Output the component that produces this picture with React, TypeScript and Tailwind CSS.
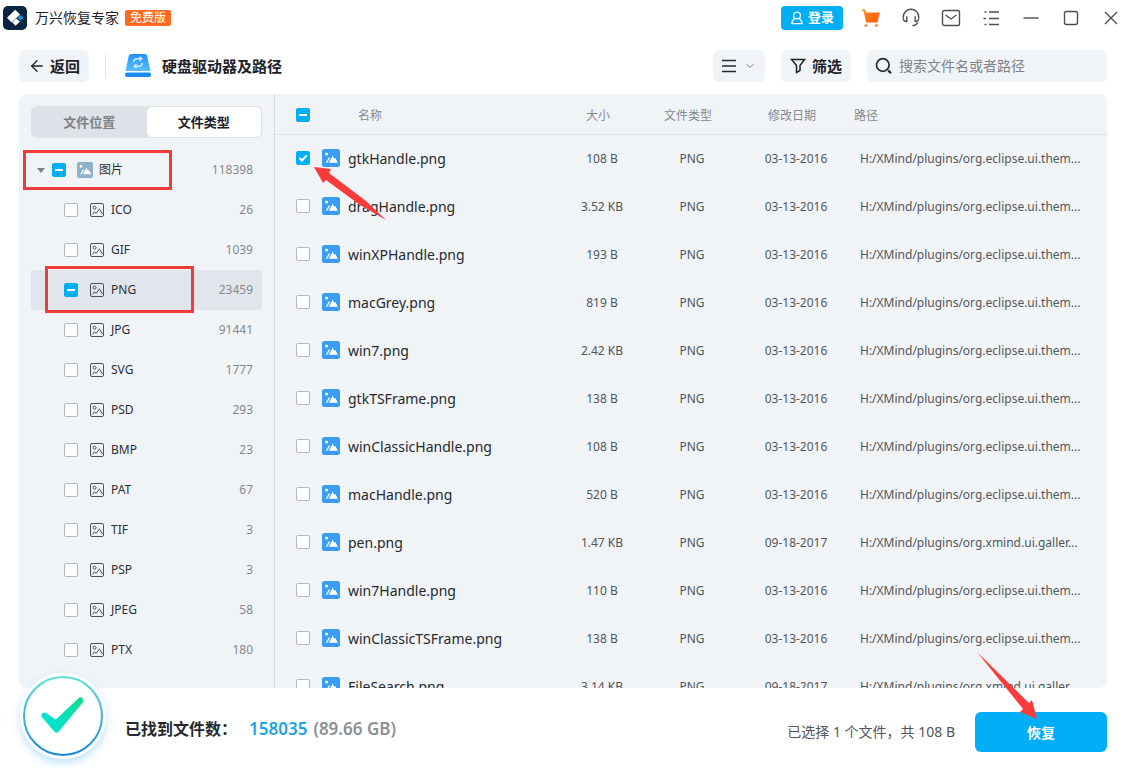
import { ArrowLeft, ChevronDown } from 'lucide-react';

type FileRow = { name: string; size: string; date: string; path: string };

const themePath = 'H:/XMind/plugins/org.eclipse.ui.them...';
const galleryPath = 'H:/XMind/plugins/org.xmind.ui.galler...';

const fileTypes = [
  { label: 'ICO', count: 26 },
  { label: 'GIF', count: 1039 },
  { label: 'PNG', count: 23459 },
  { label: 'JPG', count: 91441 },
  { label: 'SVG', count: 1777 },
  { label: 'PSD', count: 293 },
  { label: 'BMP', count: 23 },
  { label: 'PAT', count: 67 },
  { label: 'TIF', count: 3 },
  { label: 'PSP', count: 3 },
  { label: 'JPEG', count: 58 },
  { label: 'PTX', count: 180 },
];

const files: FileRow[] = [
  { name: 'gtkHandle.png', size: '108 B', date: '03-13-2016', path: themePath },
  { name: 'dragHandle.png', size: '3.52 KB', date: '03-13-2016', path: themePath },
  { name: 'winXPHandle.png', size: '193 B', date: '03-13-2016', path: themePath },
  { name: 'macGrey.png', size: '819 B', date: '03-13-2016', path: themePath },
  { name: 'win7.png', size: '2.42 KB', date: '03-13-2016', path: themePath },
  { name: 'gtkTSFrame.png', size: '138 B', date: '03-13-2016', path: themePath },
  { name: 'winClassicHandle.png', size: '108 B', date: '03-13-2016', path: themePath },
  { name: 'macHandle.png', size: '520 B', date: '03-13-2016', path: themePath },
  { name: 'pen.png', size: '1.47 KB', date: '09-18-2017', path: galleryPath },
  { name: 'win7Handle.png', size: '110 B', date: '03-13-2016', path: themePath },
  { name: 'winClassicTSFrame.png', size: '138 B', date: '03-13-2016', path: themePath },
  { name: 'FileSearch.png', size: '3.14 KB', date: '09-18-2017', path: galleryPath },
];

type CheckState = 'off' | 'on' | 'mixed';

function Checkbox({ id, label, state = 'off' }: { id?: string; label?: string; state?: CheckState }) {
  return (
    <span className="relative block h-3.5 w-3.5 shrink-0">
      <input
        type="checkbox"
        id={id}
        aria-label={label}
        defaultChecked={state === 'on'}
        ref={(el) => {
          if (el) el.indeterminate = state === 'mixed';
        }}
        className="block h-3.5 w-3.5 appearance-none rounded-[2px] border border-[#b4b9be] bg-white checked:border-[#00aef5] checked:bg-[#00aef5] indeterminate:border-[#00aef5] indeterminate:bg-[#00aef5]"
      />
      {state !== 'off' && (
        <svg viewBox="0 0 14 14" className="pointer-events-none absolute inset-0" fill="none" stroke="#fff" strokeWidth="2">
          {state === 'on' ? <path d="M3.5 7 6 9.5 10.7 4.3" /> : <path d="M3 7h8" />}
        </svg>
      )}
    </span>
  );
}

function PictureIcon({ className }: { className: string }) {
  return (
    <svg viewBox="0 0 18 18" className={className} aria-hidden="true">
      <rect width="18" height="18" rx="2.5" fill="currentColor" />
      <circle cx="4.6" cy="5" r="1.5" fill="#fff" />
      <path d="M3.6 13.8 6.6 8.8 8.2 8.8 5.3 13.8Z" fill="#fff" />
      <path d="M6.8 13.8 10.6 6.6 12.4 9.8 13.2 8.8 16 13.8Z" fill="#fff" />
    </svg>
  );
}

function OutlinePictureIcon() {
  return (
    <svg viewBox="0 0 14 14" className="h-3.5 w-3.5 shrink-0" fill="none" stroke="#4d5357" aria-hidden="true">
      <rect x="0.5" y="0.5" width="13" height="13" rx="1.5" />
      <circle cx="4.6" cy="4.6" r="1.5" />
      <path d="M2.5 11.5 4.2 9l2.2 1.2L9.4 5.8l3 5.2" />
    </svg>
  );
}

function TitleBar() {
  return (
    <header className="flex h-9 shrink-0 items-center justify-between pr-2 pl-[3px]">
      <div className="flex items-center">
        <svg viewBox="0 0 24 24" className="h-6 w-6" aria-hidden="true">
          <rect width="24" height="24" rx="5" fill="#0b2440" />
          <path d="M12.2 3.8 17 8.5 8.6 16.4 4 11.8Z" fill="#fff" />
          <path d="M16.6 9.6h2L20.6 11.8 17.6 14.6 14 12Z" fill="#1f8fc9" />
          <path d="M13 12.4 17 15.4 12.6 19.8 9.4 16.6Z" fill="#fff" />
        </svg>
        <h1 className="ml-2 text-sm text-[#1d2226]">万兴恢复专家</h1>
        <span className="ml-1.5 flex h-4 items-center rounded-xs bg-[#ff6a1f] px-[5px] text-xs text-white">免费版</span>
      </div>
      <div className="flex items-center gap-5 text-[#4a4f54]">
        <button className="-mr-0.5 flex h-6 w-[62px] items-center justify-center gap-1 rounded bg-[#00aef5] text-[13px] font-bold text-white">
          <svg viewBox="0 0 14 14" className="h-3.5 w-3.5" fill="none" stroke="currentColor" strokeWidth="1.3">
            <circle cx="7" cy="4.5" r="3.4" />
            <path d="M4.8 7.6C2.8 8.6 2 10.3 1.8 12.6h10.4c-.2-2.3-1-4-3-5" />
          </svg>
          登录
        </button>
        <button aria-label="购物车">
          <svg viewBox="0 0 20 20" className="h-5 w-5">
            <defs>
              <linearGradient id="cart" x1="0" y1="0" x2="1" y2="1">
                <stop offset="0" stopColor="#ff8a1c" />
                <stop offset="1" stopColor="#ff5a0a" />
              </linearGradient>
            </defs>
            <path d="M1 1.5h3l.9 2.9H19L16.400 14.500H5.200L2.600 3H1Z" fill="url(#cart)" />
            <path d="M3.500 17.500h2.800M14 17.500h2.800" stroke="#ff6a1f" strokeWidth="2" />
          </svg>
        </button>
        <button aria-label="客服">
          <svg viewBox="0 0 20 20" className="h-5 w-5" fill="none" stroke="currentColor" strokeWidth="1.4">
            <path d="M2.300 10.500V9a7.700 7.700 0 0 1 15.400 0v1.500" />
            <path d="M5.800 8.200v5.300c-2 0-3.500-1.200-3.500-2.900M14.200 8.200v5.300c2 0 3.500-1.200 3.500-2.900" />
            <path d="M16.800 14.500c-.9 1.800-2.500 2.900-5.300 3.200" />
          </svg>
        </button>
        <button aria-label="邮件">
          <svg viewBox="0 0 20 20" className="h-5 w-5" fill="none" stroke="currentColor" strokeWidth="1.4">
            <rect x="1.500" y="2.500" width="17" height="15" rx="2" />
            <path d="m4.500 7 5.500 4 5.500-4" />
          </svg>
        </button>
        <button aria-label="菜单">
          <svg viewBox="0 0 20 20" className="h-5 w-5" fill="none" stroke="currentColor" strokeWidth="1.4">
            <path d="M3.500 4h2M8 4H18M2.500 10.500h2.500M8 10.500H18M3.500 16.500h2M8 16.500H18" />
          </svg>
        </button>
        <button aria-label="最小化">
          <svg viewBox="0 0 20 20" className="h-5 w-5" fill="none" stroke="currentColor" strokeWidth="1.4">
            <path d="M2.500 10h15" />
          </svg>
        </button>
        <button aria-label="最大化">
          <svg viewBox="0 0 20 20" className="h-5 w-5" fill="none" stroke="currentColor" strokeWidth="1.4">
            <rect x="3.500" y="3.500" width="13" height="13" rx="2" />
          </svg>
        </button>
        <button aria-label="关闭" className="-mr-0.5">
          <svg viewBox="0 0 20 20" className="h-5 w-5" fill="none" stroke="currentColor" strokeWidth="1.4">
            <path d="m4 4 12 12M16 4 4 16" />
          </svg>
        </button>
      </div>
    </header>
  );
}

function Toolbar() {
  return (
    <div className="flex h-[58px] shrink-0 items-center px-5 pt-0.5">
      <button className="-ml-px flex h-8 w-[70px] items-center justify-center gap-1 rounded-md bg-[#f1f4f7] text-[15px] font-bold text-[#1d2226]">
        <ArrowLeft size={18} strokeWidth={1.75} />
        返回
      </button>
      <div className="ml-4 h-6 w-px bg-[#e3e7ea]" />
      <svg viewBox="0 0 26 24" className="ml-[19px] h-6 w-[26px]" aria-hidden="true">
        <defs>
          <linearGradient id="drive" x1="0" y1="0" x2="0" y2="1">
            <stop offset="0" stopColor="#1f93f5" />
            <stop offset="1" stopColor="#5cc0ff" />
          </linearGradient>
        </defs>
        <path d="M6.500 0h13c1.500 0 2.500.8 2.800 2.200L25.500 17H.5L3.700 2.200C4 .8 5 0 6.500 0Z" fill="url(#drive)" />
        <rect y="18.500" width="26" height="4.500" rx="2" fill="#1a8cf0" />
        <path d="M8.600 8.200c0-2.200 1.400-3.400 3.600-3.400h4M14.400 2.800l2.400 2-2.400 2M17.400 8.800c0 2.200-1.400 3.400-3.600 3.400h-4M11.600 14.200l-2.400-2 2.400-2" fill="none" stroke="#cfeaff" strokeWidth="1.500" />
      </svg>
      <h2 className="ml-[11px] text-[15px] font-bold text-[#1d2226]">硬盘驱动器及路径</h2>

      <div className="ml-auto flex items-center">
        <button aria-label="视图" className="flex h-8 w-[52px] items-center justify-center gap-2 rounded-md bg-[#f1f4f7]">
          <svg viewBox="0 0 14 14" className="h-3.5 w-3.5" stroke="#25292d" strokeWidth="1.500">
            <path d="M0 1.500h14M0 7h14M0 12.500h14" />
          </svg>
          <ChevronDown size={12} strokeWidth={2} className="text-[#7a8085]" />
        </button>
        <button className="ml-4 flex h-8 w-[70px] items-center justify-center gap-1.5 rounded-md bg-[#f1f4f7] text-[15px] font-bold text-[#1d2226]">
          <svg viewBox="0 0 16 16" className="h-4 w-4" fill="none" stroke="currentColor" strokeWidth="1.500">
            <path d="M1.500 1.500h13L10 7.500v5l-3.500 2v-7Z" />
          </svg>
          筛选
        </button>
        <label className="ml-4 flex h-8 w-60 items-center gap-1.5 rounded-md bg-[#f1f4f7] pl-2">
          <svg viewBox="0 0 18 18" className="h-[18px] w-[18px] shrink-0" fill="none" stroke="#25292d" strokeWidth="1.700">
            <circle cx="7.800" cy="8" r="6.300" />
            <path d="m13.200 13.400 2.800 2.800" strokeWidth="2.200" />
          </svg>
          <input
            type="text"
            aria-label="搜索文件名或者路径"
            placeholder="搜索文件名或者路径"
            className="min-w-0 flex-1 bg-transparent text-sm outline-none placeholder:text-[#7d8388]"
          />
        </label>
      </div>
    </div>
  );
}

function Sidebar() {
  return (
    <aside className="flex w-64 shrink-0 flex-col border-r border-[#d7dce0] px-3 pt-3">
      <div className="mb-3 flex h-8 shrink-0 rounded-md bg-[#dce2e7] p-px text-[13px] font-bold">
        <button className="flex-1 pt-0.5 text-[#7b8186]">文件位置</button>
        <button className="flex-1 rounded-[5px] bg-white pt-0.5 text-[#1d2226]">文件类型</button>
      </div>
      <ul className="text-xs text-[#2a2f34]">
        <li className="relative flex h-10 items-center pr-[9px] pl-1.5">
          <svg viewBox="0 0 8 5" className="h-[5px] w-2" aria-hidden="true">
            <path d="M0 0h8L4 5Z" fill="#7b8186" />
          </svg>
          <label className="ml-[7px] flex items-center">
            <Checkbox state="mixed" />
            <PictureIcon className="ml-[11px] h-4 w-4 text-[#8fb0ca]" />
            <span className="ml-1.5">图片</span>
          </label>
          <span className="ml-auto text-[#84898e]">118398</span>
          <div className="pointer-events-none absolute top-0 -left-2 h-10 w-[149px] border-3 border-[#ee3b3b]" />
        </li>
        {fileTypes.map(({ label, count }) => {
          const active = label === 'PNG';
          return (
            <li
              key={label}
              className={`relative flex h-10 items-center rounded-xs pr-[9px] pl-[33px] ${active ? 'bg-[#e0e6ec]' : ''}`}
            >
              <label className="flex items-center">
                <Checkbox state={active ? 'mixed' : 'off'} />
                <span className="ml-3">
                  <OutlinePictureIcon />
                </span>
                <span className="ml-[7px]">{label}</span>
              </label>
              <span className="ml-auto text-[#84898e]">{count}</span>
              {active && (
                <div className="pointer-events-none absolute -top-1 left-3.5 h-[47px] w-[149px] border-3 border-[#ee3b3b]" />
              )}
            </li>
          );
        })}
      </ul>
    </aside>
  );
}

function FileTable() {
  return (
    <div className="relative min-w-0 flex-1">
      <div className="h-full overflow-hidden">
        <table className="w-full table-fixed border-collapse text-xs text-[#50565b]">
          <colgroup>
            <col className="w-[47px]" />
            <col />
            <col className="w-[88px]" />
            <col className="w-[92px]" />
            <col className="w-[116px]" />
            <col className="w-[253px]" />
          </colgroup>
          <thead>
            <tr className="h-10 border-b border-[#dde2e6] text-[#84898e]">
              <th className="pt-0.5 pl-[21px]">
                <Checkbox state="mixed" label="全选" />
              </th>
              <th className="pt-1 pl-9 text-left font-normal">名称</th>
              <th className="pt-1 pr-2 text-center font-normal">大小</th>
              <th className="pt-1 pr-2 text-center font-normal">文件类型</th>
              <th className="pt-1 pr-2 text-center font-normal">修改日期</th>
              <th className="pt-1 text-left font-normal">路径</th>
            </tr>
          </thead>
          <tbody>
            {files.map(({ name, size, date, path }, i) => (
              <tr key={name} className="h-12">
                <td className="pl-[21px]">
                  <Checkbox id={`file-${i}`} state={i === 0 ? 'on' : 'off'} />
                </td>
                <td>
                  <label htmlFor={`file-${i}`} className="flex items-center gap-2 text-[#25292d]">
                    <PictureIcon className="h-[18px] w-[18px] shrink-0 text-[#389bf5]" />
                    <span className="pt-0.5 text-sm">{name}</span>
                  </label>
                </td>
                <td className="pt-0.5 text-center">{size}</td>
                <td className="pt-0.5 text-center">PNG</td>
                <td className="pt-0.5 text-center">{date}</td>
                <td className="truncate pt-0.5 pl-1.5">{path}</td>
              </tr>
            ))}
          </tbody>
        </table>
      </div>
      {/* pointer to the ticked row */}
      <svg viewBox="0 0 72 53" className="pointer-events-none absolute top-[73px] left-[39px] h-[53px] w-[72px]" aria-hidden="true">
        <path d="M0 0 17 2 15 6 52 34 72 53 46 38 12 13 9 16Z" fill="#fb3a3a" />
      </svg>
    </div>
  );
}

function FooterBar() {
  return (
    <footer className="relative flex h-20 shrink-0 items-center px-5">
      <svg viewBox="0 0 100 100" className="absolute -top-5 left-[13px] h-[100px] w-[100px]" aria-hidden="true">
        <defs>
          <linearGradient id="ring" x1="0" y1="0" x2="0" y2="1">
            <stop offset="0" stopColor="#5de0dc" />
            <stop offset="1" stopColor="#1687dc" />
          </linearGradient>
          <linearGradient id="tick" gradientUnits="userSpaceOnUse" x1="30" y1="64" x2="70" y2="30">
            <stop offset="0" stopColor="#00e3dc" />
            <stop offset="1" stopColor="#15dd90" />
          </linearGradient>
          <filter id="glow" x="-20%" y="-20%" width="140%" height="140%">
            <feDropShadow dx="0" dy="4" stdDeviation="4" floodColor="#42a8f5" floodOpacity="0.350" />
          </filter>
        </defs>
        <circle cx="50" cy="48" r="43" fill="#fff" filter="url(#glow)" />
        <circle cx="50" cy="48" r="39" fill="#fff" stroke="url(#ring)" strokeWidth="2" />
        <path d="M31.500 47.500 43 55.500 67.500 32.500 43.500 61.500Z" fill="url(#tick)" stroke="url(#tick)" strokeWidth="6" strokeLinejoin="round" />
      </svg>
      <p className="mt-0.5 ml-[105px] flex items-center text-base font-bold text-[#25292d]">
        已找到文件数：
        <span className="ml-3 text-[17px] font-semibold text-[#1ba4e6]">158035</span>
        <span className="ml-1.5 text-[17px] font-semibold text-[#8b9094]">(89.66 GB)</span>
      </p>
      <p className="mt-2 ml-auto text-sm text-[#50565b]">已选择 1 个文件，共 108 B</p>
      <div className="relative ml-5">
        <button className="mt-2 h-10 w-[132px] rounded-md bg-[#00aef5] pt-0.5 text-sm font-bold text-white">恢复</button>
        {/* pointer to the recover button */}
        <svg viewBox="0 0 62 68" className="pointer-events-none absolute -top-[52px] left-[2px] h-[68px] w-[62px]" aria-hidden="true">
          <path d="M0 0 52 51 55 48 60 67 43 60 46 57Z" fill="#fb3a3a" />
        </svg>
      </div>
    </footer>
  );
}

export default function App() {
  return (
    <div className="flex h-screen flex-col overflow-hidden bg-white font-['Noto_Sans','Noto_Sans_CJK_SC',sans-serif]">
      <TitleBar />
      <Toolbar />
      <main className="mr-5 ml-[19px] flex min-h-0 flex-1 overflow-hidden rounded-lg bg-[#f1f4f7]">
        <Sidebar />
        <FileTable />
      </main>
      <FooterBar />
    </div>
  );
}
